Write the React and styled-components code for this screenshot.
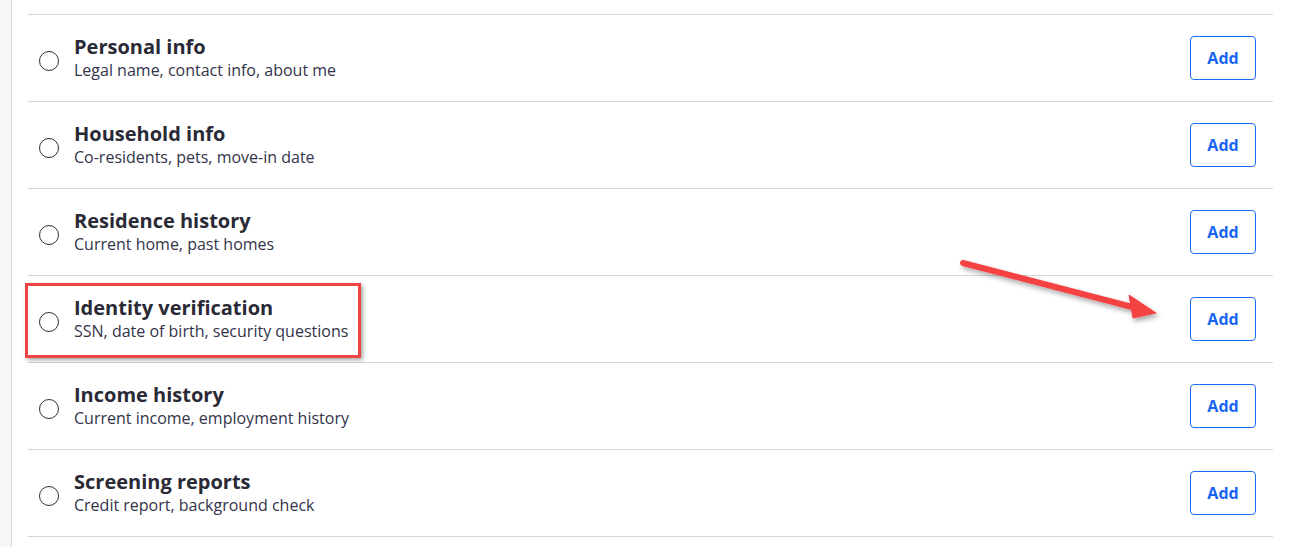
import React from "react";
import styled, { createGlobalStyle } from "styled-components";

const GlobalStyle = createGlobalStyle`
  html, body {
    margin: 0;
    padding: 0;
    background: #ffffff;
  }
  body {
    font-family: "Open Sans", "Liberation Sans", sans-serif;
  }
`;

const Page = styled.div`
  position: relative;
  display: flex;
  height: 547px;
  overflow: hidden;
`;

const SideStrip = styled.div`
  width: 11px;
  flex: 0 0 11px;
  background: #f7f7f8;
  border-right: 1px solid #dcdcdc;
`;

const Content = styled.div`
  flex: 1;
  padding: 14px 16px 0 16px;
`;

const List = styled.ul`
  list-style: none;
  margin: 0;
  padding: 0;
  border-top: 1px solid #d6d6d6;
`;

const Row = styled.li`
  position: relative;
  display: flex;
  align-items: center;
  height: 86px;
  border-bottom: 1px solid #d6d6d6;
  padding: 0 17px 0 11px;
`;

const Radio = styled.span`
  box-sizing: border-box;
  width: 20px;
  height: 20px;
  flex: 0 0 20px;
  border: 1.6px solid #2f2f38;
  border-radius: 50%;
  margin-top: 6px;
`;

const Text = styled.div`
  flex: 1;
  display: flex;
  flex-direction: column;
  margin-left: 15px;
`;

const Title = styled.div`
  font-size: 20px;
  line-height: 24px;
  font-weight: 700;
  color: #2a2a36;
`;

const Subtitle = styled.div`
  font-size: 16px;
  line-height: 22px;
  color: #33334a;
`;

const AddButton = styled.button`
  box-sizing: border-box;
  width: 66px;
  height: 44px;
  border: 1px solid #1a6cf0;
  border-radius: 4px;
  background: #ffffff;
  color: #1765f2;
  font-family: "Open Sans", "Liberation Sans", sans-serif;
  font-size: 16px;
  font-weight: 700;
  cursor: pointer;
`;

const Highlight = styled.div`
  position: absolute;
  left: -3px;
  top: 7px;
  width: 336px;
  height: 75px;
  box-sizing: border-box;
  border: 3px solid #f04545;
  box-shadow: 2px 2px 4px rgba(0, 0, 0, 0.35);
  pointer-events: none;
`;

const Arrow = styled.svg`
  position: absolute;
  left: 0;
  top: 0;
  pointer-events: none;
`;

const sections = [
  { title: "Personal info", detail: "Legal name, contact info, about me" },
  { title: "Household info", detail: "Co-residents, pets, move-in date" },
  { title: "Residence history", detail: "Current home, past homes" },
  {
    title: "Identity verification",
    detail: "SSN, date of birth, security questions",
    highlighted: true,
  },
  { title: "Income history", detail: "Current income, employment history" },
  { title: "Screening reports", detail: "Credit report, background check" },
];

const App = () => {
  return (
    <>
      <GlobalStyle />
      <Page>
        <SideStrip />
        <Content>
          <List>
            {sections.map((s) => (
              <Row key={s.title}>
                <Radio />
                <Text>
                  <Title>{s.title}</Title>
                  <Subtitle>{s.detail}</Subtitle>
                </Text>
                <AddButton>Add</AddButton>
                {s.highlighted && <Highlight />}
              </Row>
            ))}
          </List>
        </Content>

        <Arrow width="1289" height="547" viewBox="0 0 1289 547">
          <defs>
            <filter id="arrowShadow" x="-10%" y="-50%" width="130%" height="250%">
              <feDropShadow dx="2" dy="3" stdDeviation="2.5" floodColor="#000" floodOpacity="0.35" />
            </filter>
          </defs>
          <g filter="url(#arrowShadow)" fill="#f44343" stroke="#f44343">
            <line x1="963" y1="263" x2="1136" y2="308" strokeWidth="6" strokeLinecap="round" />
            <polygon points="1156,313 1129,295 1133,318" strokeWidth="1" strokeLinejoin="round" />
          </g>
        </Arrow>
      </Page>
    </>
  );
};

export default App;
